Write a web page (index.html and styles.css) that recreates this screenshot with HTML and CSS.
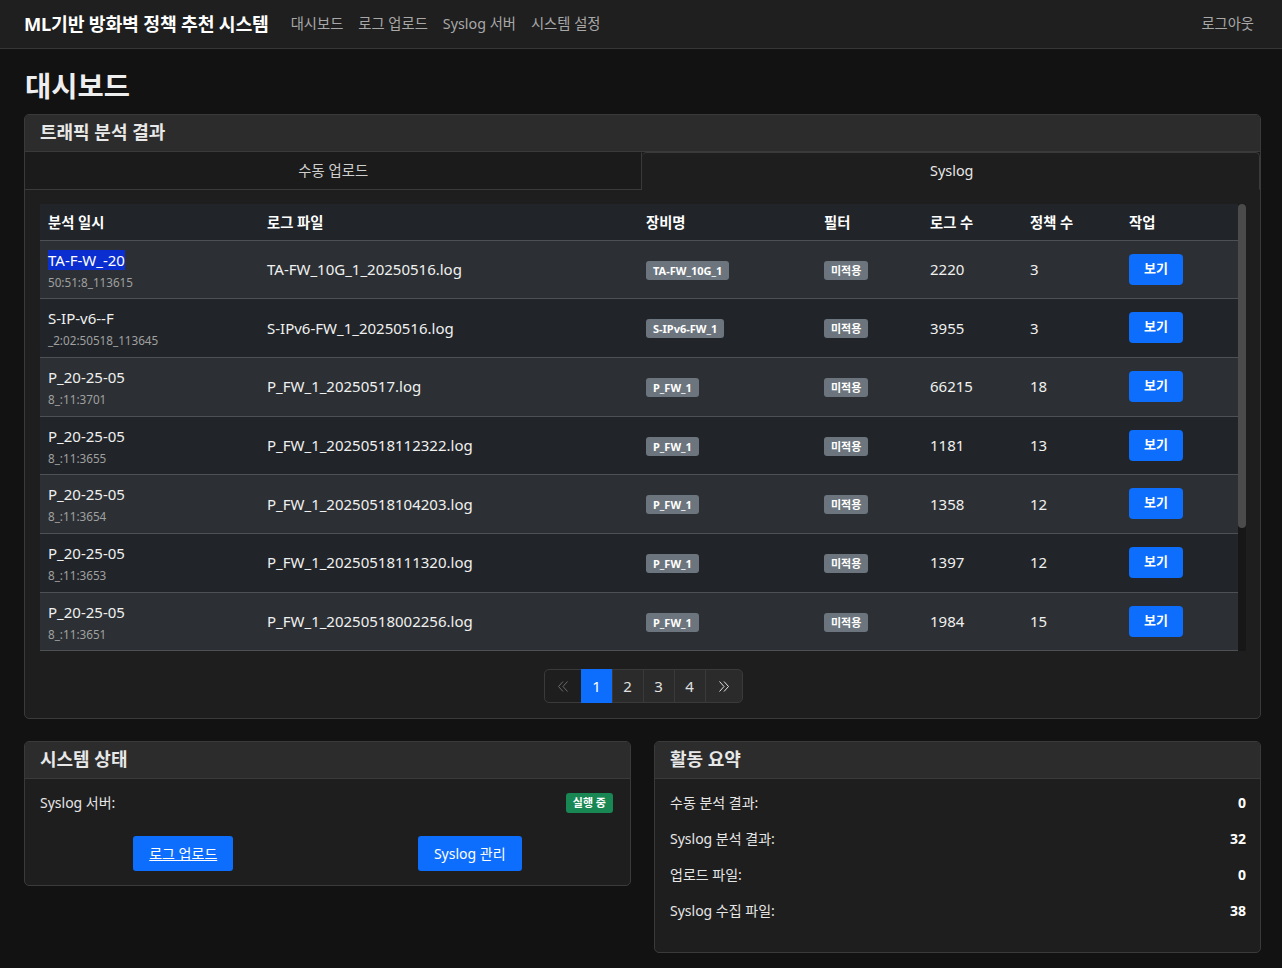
FILE: index.html
```html
<!DOCTYPE html>
<html lang="ko">
<head>
<meta charset="utf-8">
<title>ML기반 방화벽 정책 추천 시스템</title>
<link rel="stylesheet" href="styles.css">
</head>
<body>
<nav class="navbar">
  <div class="nav-left">
    <span class="brand">ML기반 방화벽 정책 추천 시스템</span>
    <a class="nav-link">대시보드</a>
    <a class="nav-link">로그 업로드</a>
    <a class="nav-link">Syslog 서버</a>
    <a class="nav-link">시스템 설정</a>
  </div>
  <a class="nav-link logout">로그아웃</a>
</nav>

<main class="container">
  <h1 class="page-title">대시보드</h1>

  <section class="card">
    <div class="card-header">트래픽 분석 결과</div>
    <div class="tabs">
      <div class="tab">수동 업로드</div>
      <div class="tab active">Syslog</div>
    </div>
    <div class="tab-content">
      <div class="table-wrap">
        <div class="table-scroll">
          <table class="results">
            <thead>
              <tr>
                <th class="c1">분석 일시</th>
                <th class="c2">로그 파일</th>
                <th class="c3">장비명</th>
                <th class="c4">필터</th>
                <th class="c5">로그 수</th>
                <th class="c6">정책 수</th>
                <th class="c7">작업</th>
              </tr>
            </thead>
            <tbody>
              <tr>
                <td><div class="main"><span class="selected">TA-F-W_-20</span></div><div class="sub">50:51:8_113615</div></td>
                <td>TA-FW_10G_1_20250516.log</td>
                <td><span class="badge">TA-FW_10G_1</span></td>
                <td><span class="badge">미적용</span></td>
                <td>2220</td>
                <td>3</td>
                <td><button class="btn-view">보기</button></td>
              </tr>
              <tr>
                <td><div class="main">S-IP-v6--F</div><div class="sub">_2:02:50518_113645</div></td>
                <td>S-IPv6-FW_1_20250516.log</td>
                <td><span class="badge">S-IPv6-FW_1</span></td>
                <td><span class="badge">미적용</span></td>
                <td>3955</td>
                <td>3</td>
                <td><button class="btn-view">보기</button></td>
              </tr>
              <tr>
                <td><div class="main">P_20-25-05</div><div class="sub">8_:11:3701</div></td>
                <td>P_FW_1_20250517.log</td>
                <td><span class="badge">P_FW_1</span></td>
                <td><span class="badge">미적용</span></td>
                <td>66215</td>
                <td>18</td>
                <td><button class="btn-view">보기</button></td>
              </tr>
              <tr>
                <td><div class="main">P_20-25-05</div><div class="sub">8_:11:3655</div></td>
                <td>P_FW_1_20250518112322.log</td>
                <td><span class="badge">P_FW_1</span></td>
                <td><span class="badge">미적용</span></td>
                <td>1181</td>
                <td>13</td>
                <td><button class="btn-view">보기</button></td>
              </tr>
              <tr>
                <td><div class="main">P_20-25-05</div><div class="sub">8_:11:3654</div></td>
                <td>P_FW_1_20250518104203.log</td>
                <td><span class="badge">P_FW_1</span></td>
                <td><span class="badge">미적용</span></td>
                <td>1358</td>
                <td>12</td>
                <td><button class="btn-view">보기</button></td>
              </tr>
              <tr>
                <td><div class="main">P_20-25-05</div><div class="sub">8_:11:3653</div></td>
                <td>P_FW_1_20250518111320.log</td>
                <td><span class="badge">P_FW_1</span></td>
                <td><span class="badge">미적용</span></td>
                <td>1397</td>
                <td>12</td>
                <td><button class="btn-view">보기</button></td>
              </tr>
              <tr>
                <td><div class="main">P_20-25-05</div><div class="sub">8_:11:3651</div></td>
                <td>P_FW_1_20250518002256.log</td>
                <td><span class="badge">P_FW_1</span></td>
                <td><span class="badge">미적용</span></td>
                <td>1984</td>
                <td>15</td>
                <td><button class="btn-view">보기</button></td>
              </tr>
            </tbody>
          </table>
        </div>
        <div class="scrollbar"><div class="thumb"></div></div>
      </div>
      <div class="pagination">
        <span class="page-item disabled">
          <svg width="12" height="11" viewBox="0 0 12 11"><path d="M6 0.5 L1.5 5.5 L6 10.5 M10.5 0.5 L6 5.5 L10.5 10.5" fill="none" stroke="currentColor" stroke-width="1"/></svg>
        </span>
        <span class="page-item active">1</span>
        <span class="page-item">2</span>
        <span class="page-item">3</span>
        <span class="page-item">4</span>
        <span class="page-item">
          <svg width="12" height="11" viewBox="0 0 12 11"><path d="M1.5 0.5 L6 5.5 L1.5 10.5 M6 0.5 L10.5 5.5 L6 10.5" fill="none" stroke="currentColor" stroke-width="1"/></svg>
        </span>
      </div>
    </div>
  </section>

  <div class="bottom-row">
    <section class="card">
      <div class="card-header">시스템 상태</div>
      <div class="card-body">
        <div class="status-line">
          <span>Syslog 서버:</span>
          <span class="badge badge-success">실행 중</span>
        </div>
        <div class="actions">
          <div class="action-cell"><a class="btn-primary underline">로그 업로드</a></div>
          <div class="action-cell"><a class="btn-primary">Syslog 관리</a></div>
        </div>
      </div>
    </section>

    <section class="card">
      <div class="card-header">활동 요약</div>
      <div class="card-body summary">
        <div class="summary-line"><span>수동 분석 결과:</span><strong>0</strong></div>
        <div class="summary-line"><span>Syslog 분석 결과:</span><strong>32</strong></div>
        <div class="summary-line"><span>업로드 파일:</span><strong>0</strong></div>
        <div class="summary-line"><span>Syslog 수집 파일:</span><strong>38</strong></div>
      </div>
    </section>
  </div>
</main>
</body>
</html>
```

FILE: styles.css
```css
* { box-sizing: border-box; }

html, body {
  margin: 0;
  background: #121212;
  color: #e6e6e6;
  font-family: "Noto Sans", "Noto Sans CJK KR", sans-serif;
  font-size: 14px;
}

.navbar {
  height: 49px;
  background: #1f1f1f;
  border-bottom: 1px solid #363636;
  display: flex;
  align-items: center;
  justify-content: space-between;
  padding: 0 28px 3px 24px;
}

.nav-left {
  display: flex;
  align-items: center;
  gap: 15px;
}

.brand {
  font-size: 18.3px;
  font-weight: 700;
  color: #ffffff;
  margin-right: 7px;
  letter-spacing: -0.2px;
}

.nav-link {
  font-size: 14.3px;
  color: #a8a8a8;
  text-decoration: none;
}

.container {
  padding: 20px 21px 20px 24px;
}

.page-title {
  font-size: 28.5px;
  line-height: 34px;
  font-weight: 700;
  margin: 0 0 11px 1px;
  color: #eeeeee;
}

.card {
  background: #1e1e1e;
  border: 1px solid #3a3a3a;
  border-radius: 5px;
  overflow: hidden;
}

.card-header {
  height: 37px;
  line-height: 35px;
  background: #2c2c2c;
  border-bottom: 1px solid #3a3a3a;
  padding: 0 15px;
  font-size: 18px;
  font-weight: 700;
  color: #e8e8e8;
}

.tabs {
  display: flex;
  border-bottom: 1px solid #3a3a3a;
  background: #1b1b1b;
}

.tab {
  flex: 1;
  height: 38px;
  line-height: 36px;
  text-align: center;
  font-size: 14.4px;
  color: #cfcfcf;
  margin-bottom: -1px;
  border: 1px solid transparent;
}

.tab:first-child {
  border-right-color: #3a3a3a;
  border-bottom-color: #3a3a3a;
}

.tab.active {
  background: #1e1e1e;
  color: #e8e8e8;
  border-color: #3a3a3a #3a3a3a #1e1e1e #3a3a3a;
  border-left: none;
  border-top-left-radius: 5px;
  border-top-right-radius: 5px;
  padding-left: 3px;
}

.tab-content {
  padding: 14px 14px 14px 15px;
}

.table-wrap {
  display: flex;
  height: 447px;
}

.table-scroll {
  flex: 1;
  overflow: hidden;
}

.scrollbar {
  width: 8px;
  background: #171717;
}

.thumb {
  height: 324px;
  background: #4b4b4b;
  border-radius: 4px;
}

.results {
  width: 100%;
  border-collapse: collapse;
  table-layout: fixed;
  font-size: 15px;
}

.results th {
  background: #212529;
  color: #ffffff;
  font-weight: 700;
  font-size: 14.3px;
  text-align: left;
  height: 36px;
  padding: 0 8px;
  border-bottom: 1px solid #4d5154;
}

.c1 { width: 219px; }
.c2 { width: 379px; }
.c3 { width: 178px; }
.c4 { width: 106px; }
.c5 { width: 100px; }
.c6 { width: 99px; }
.c7 { width: auto; }

.results td {
  padding: 8px 8px 8.7px;
  color: #f0f0f0;
  vertical-align: middle;
  border-bottom: 1px solid #4d5154;
  background: #212529;
  white-space: nowrap;
}

.results tbody tr:nth-child(odd) td {
  background: #2c3034;
}

.main {
  line-height: 22px;
  font-size: 15px;
}

.selected {
  background: #0b2ed0;
  color: #ffffff;
}

.sub {
  margin-top: 3px;
  line-height: 16px;
  font-size: 11.7px;
  color: #a0a0a0;
}

.badge {
  display: inline-block;
  background: #6c757d;
  color: #ffffff;
  font-size: 11px;
  font-weight: 700;
  line-height: 19px;
  padding: 0 7px;
  border-radius: 3px;
}

.badge-success {
  background: #198754;
  line-height: 20px;
  padding: 0 7px;
}

.btn-view {
  width: 54px;
  height: 31px;
  background: #0d6efd;
  color: #ffffff;
  border: none;
  border-radius: 4px;
  font-family: inherit;
  font-size: 13px;
  font-weight: 700;
  padding: 0 0 4px;
}

.pagination {
  display: flex;
  justify-content: center;
  margin: 18px 0 1px;
}

.page-item {
  height: 34px;
  min-width: 32px;
  text-align: center;
  font-size: 15px;
  color: #e0e0e0;
  background: #2b2b2b;
  border: 1px solid #3a3a3a;
  margin-left: -1px;
  display: flex;
  align-items: center;
  justify-content: center;
}

.page-item:first-child {
  min-width: 38px;
  border-radius: 5px 0 0 5px;
  margin-left: 0;
}

.page-item:last-child {
  min-width: 38px;
  border-radius: 0 5px 5px 0;
}

.page-item.disabled {
  background: #1e1e1e;
  color: #6a6a6a;
}

.page-item.active {
  background: #0d6efd;
  border-color: #0d6efd;
  color: #ffffff;
}

.bottom-row {
  display: grid;
  grid-template-columns: 1fr 1fr;
  gap: 23px;
  align-items: start;
  margin-top: 22px;
}

.card-body {
  padding: 14px 17px 14px 15px;
}

.status-line {
  display: flex;
  justify-content: space-between;
  align-items: center;
  line-height: 20px;
  font-size: 14px;
}

.actions {
  display: grid;
  grid-template-columns: 1fr 1fr;
  margin-top: 23px;
}

.action-cell {
  text-align: center;
}

.btn-primary {
  display: inline-block;
  background: #0d6efd;
  color: #ffffff;
  border-radius: 3px;
  font-size: 14px;
  line-height: 35px;
  height: 35px;
  padding: 0 16px;
  text-decoration: none;
}

.btn-primary.underline {
  text-decoration: underline;
}

.summary {
  padding: 14px 14px 15px 15px;
}

.summary-line {
  display: flex;
  justify-content: space-between;
  line-height: 20px;
  font-size: 14px;
  margin-bottom: 16px;
}

.summary-line strong {
  font-weight: 700;
  color: #ffffff;
}
```
